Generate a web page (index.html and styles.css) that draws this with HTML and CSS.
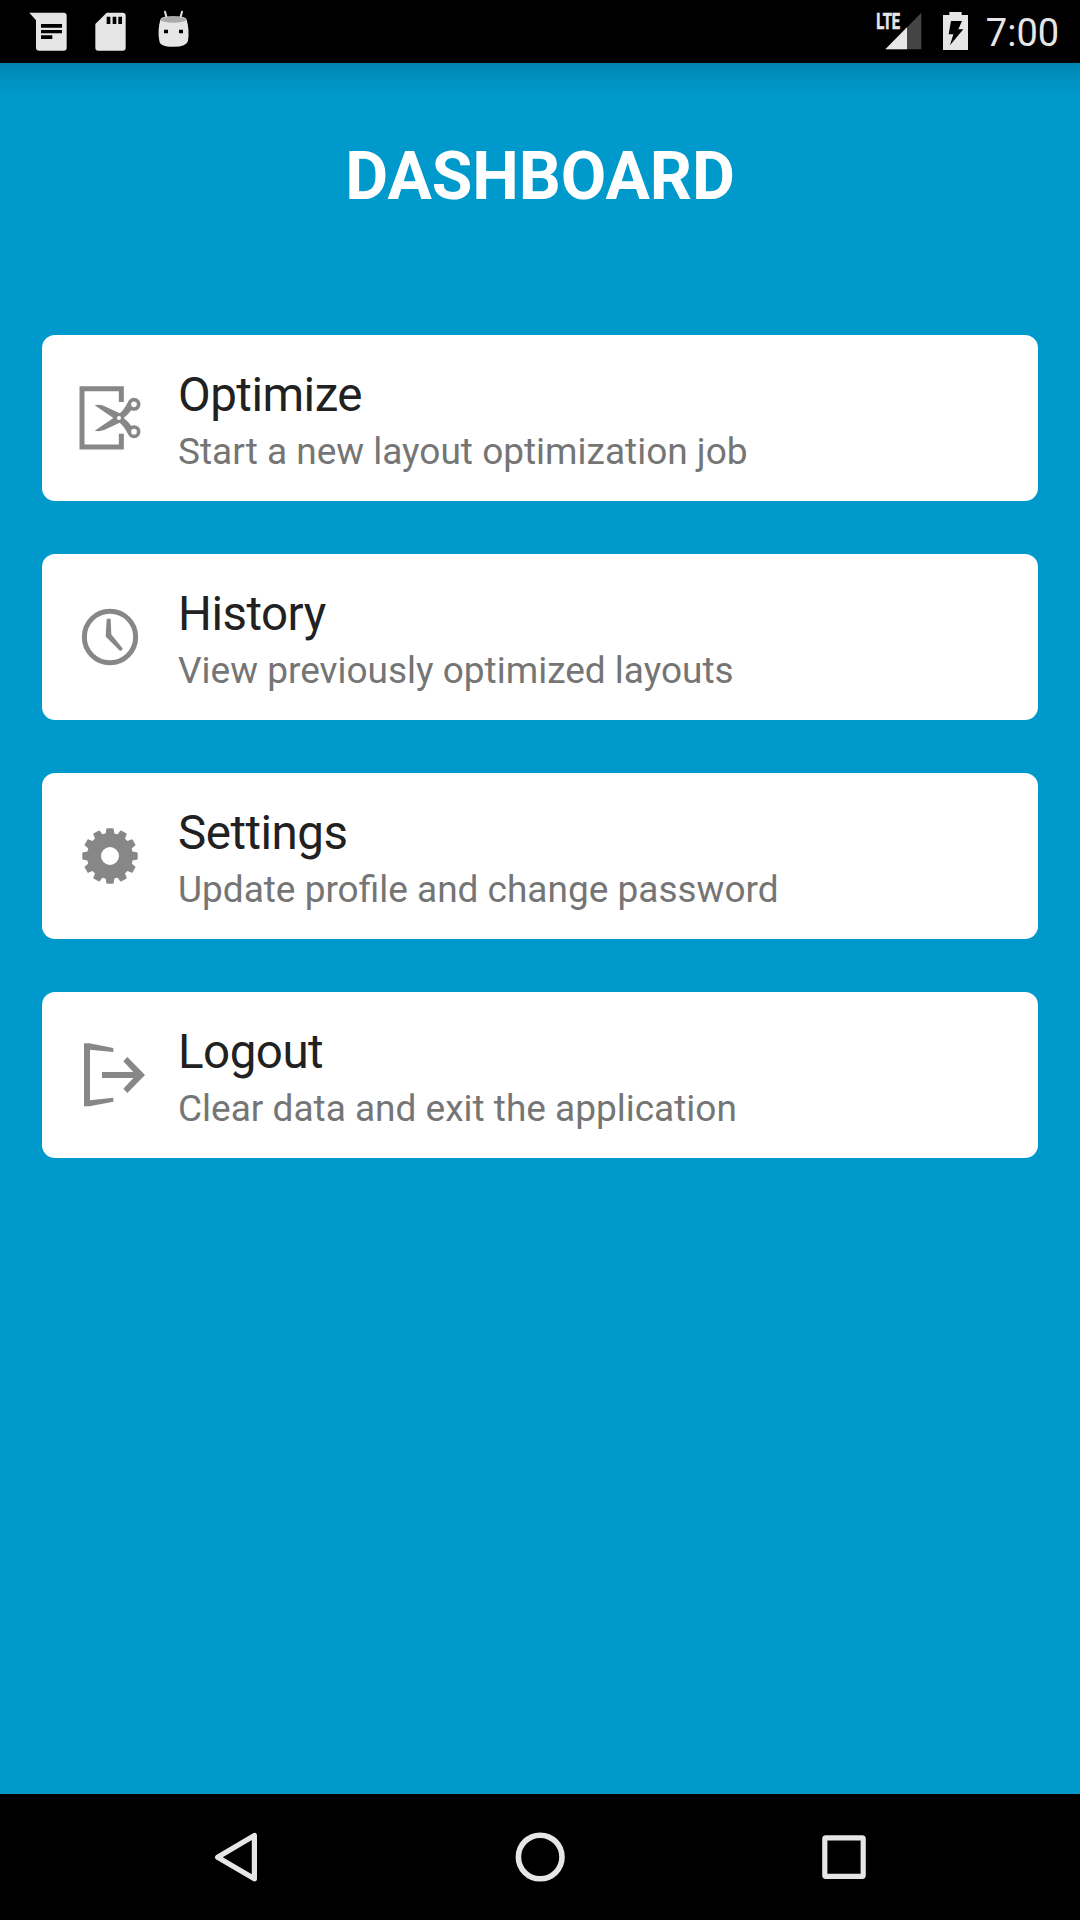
FILE: index.html
```html
<!DOCTYPE html>
<html lang="en">
<head>
<meta charset="utf-8">
<title>Dashboard</title>
<link rel="stylesheet" href="styles.css">
</head>
<body>
<div class="screen">
  <header class="status-bar">
    <svg class="status-left" viewBox="0 0 660 189" aria-hidden="true">
      <path fill="#e6e6e6" d="M88 38H191Q200 38 200 47V143Q200 152 191 152H118Q108 152 108 143V61Z"/>
      <path fill="#000" d="M123 72h63v11h-63zM123 90h63v10h-63zM123 106h34v11h-34z"/>
      <path fill="#e6e6e6" d="M320 38H368Q377 38 377 47V143Q377 152 368 152H295Q286 152 286 143V72Z"/>
      <path fill="#000" d="M320 50h11v22h-11zM338 50h11v22h-11zM355 50h11v22h-11z"/>
      <path fill="none" stroke="#e6e6e6" stroke-width="6" stroke-linecap="round" d="M495 35L500 54M546 35L541 54"/>
      <path fill="#e6e6e6" d="M481 59Q483 49 520 49T560 59Q569 91 564 122Q561 140 520 140T478 122Q472 91 481 59Z"/>
      <ellipse fill="#aaa" cx="520" cy="59" rx="38" ry="9"/>
      <path fill="#000" d="M492 89h12v11h-12zM537 89h12v11h-12z"/>
    </svg>
    <div class="status-right">
      <svg class="signal" viewBox="0 0 340 189" aria-hidden="true">
        <path fill="#444" d="M184 38V148H76Z"/>
        <path fill="#e6e6e6" d="M141 82V148H76Z"/>
        <text class="network" x="49" y="87" textLength="71" lengthAdjust="spacingAndGlyphs">LTE</text>
        <path fill="#e6e6e6" d="M249 45H268V36H305V45H324V150H249Z"/>
        <path fill="#000" d="M273 63H306L295 88H310L270 136L280 103H266Z"/>
      </svg>
      <span class="clock">7:00</span>
    </div>
  </header>

  <main class="content">
    <h1 class="heading">DASHBOARD</h1>
    <nav class="cards">
      <a class="card">
        <svg class="card-icon" viewBox="0 -6 300 300" aria-hidden="true">
          <path fill="none" stroke="#878787" stroke-width="15" d="M184 96V56H66V231H184V191"/>
          <path fill="#878787" d="M104 106Q118 102 134 109L179 130Q190 122 203 98L218 115Q205 134 191 144Q205 154 218 173L203 190Q190 166 179 158L134 179Q118 186 104 182L160 144Z"/>
          <g fill="#fff" stroke="#878787" stroke-width="11"><circle cx="222" cy="103" r="14"/><circle cx="222" cy="185" r="14"/></g>
          <circle fill="#fff" cx="177" cy="144" r="6"/>
        </svg>
        <span class="card-text"><span class="title">Optimize</span><span class="subtitle">Start a new layout optimization job</span></span>
      </a>
      <a class="card">
        <svg class="card-icon" viewBox="0 -9 300 300" aria-hidden="true">
          <circle cx="150" cy="141" r="77" fill="none" stroke="#878787" stroke-width="15"/>
          <path fill="#878787" stroke="#878787" stroke-width="4" stroke-linejoin="round" d="M142 88H150L152 134L186 176L181 181L139 139Z"/>
        </svg>
        <span class="card-text"><span class="title">History</span><span class="subtitle">View previously optimized layouts</span></span>
      </a>
      <a class="card">
        <svg class="card-icon" viewBox="0 -12 300 300" aria-hidden="true">
          <circle cx="150" cy="138" r="48" fill="none" stroke="#878787" stroke-width="42"/>
          <g fill="#878787">
            <g id="teeth"><path d="M136 78L139 58Q139 55 142 55H158Q161 55 161 58L164 78ZM136 198L139 218Q139 221 142 221H158Q161 221 161 218L164 198Z"/></g>
            <use href="#teeth" transform="rotate(30 150 138)"/>
            <use href="#teeth" transform="rotate(60 150 138)"/>
            <use href="#teeth" transform="rotate(90 150 138)"/>
            <use href="#teeth" transform="rotate(120 150 138)"/>
            <use href="#teeth" transform="rotate(150 150 138)"/>
          </g>
        </svg>
        <span class="card-text"><span class="title">Settings</span><span class="subtitle">Update profile and change password</span></span>
      </a>
      <a class="card">
        <svg class="card-icon" viewBox="0 0 300 300" aria-hidden="true">
          <path fill="#878787" d="M72 55H88L160 69V81L90 74V226L160 218V230L88 244H72Z"/>
          <path fill="#878787" d="M126 141H220L190 109L202 96L255 150L202 204L190 191L220 159H126Z"/>
        </svg>
        <span class="card-text"><span class="title">Logout</span><span class="subtitle">Clear data and exit the application</span></span>
      </a>
    </nav>
  </main>

  <footer class="nav-bar">
    <svg class="nav-icons" viewBox="0 0 1080 126" aria-hidden="true">
      <g fill="none" stroke="#e6e6e6" stroke-width="5.2" stroke-linejoin="round">
        <path d="M217.6 63.3L254.4 41.4V84.8Z"/>
        <circle cx="540.2" cy="63" r="21.8" stroke-width="5.6"/>
        <rect x="824.8" y="43.9" width="38.4" height="38.4" rx="1"/>
      </g>
    </svg>
  </footer>
</div>
</body>
</html>
```
FILE: styles.css
```css
* { box-sizing: border-box; }

body {
  margin: 0;
  font-family: Roboto, "Liberation Sans", sans-serif;
}

.screen {
  display: flex;
  flex-direction: column;
  width: 1080px;
  height: 1920px;
  background: #0099cc;
}

.status-bar {
  display: flex;
  justify-content: space-between;
  height: 63px;
  background: #000;
}

.status-left { width: 220px; height: 63px; }
.status-right { display: flex; width: 220px; }
.signal { flex: none; width: 113.33px; height: 63px; }

.network {
  fill: #e6e6e6;
  stroke: #e6e6e6;
  stroke-width: 2px;
  font-size: 65px;
  font-weight: 700;
}

.clock {
  padding-left: 12.5px;
  color: #e6e6e6;
  font-size: 38px;
  line-height: 67px;
  white-space: nowrap;
}

.content {
  flex: 1;
  padding: 74px 42px 0;
  background: linear-gradient(rgba(0, 0, 0, 0.13), rgba(0, 0, 0, 0.05) 16px, transparent 36px);
}

.heading {
  margin: 0;
  color: #fff;
  font-size: 66px;
  font-weight: 700;
  line-height: 80px;
  letter-spacing: -0.1px;
  text-align: center;
}

.cards {
  display: grid;
  gap: 53px;
  margin-top: 118px;
}

.card {
  display: flex;
  align-items: center;
  height: 166px;
  padding-left: 18px;
  border-radius: 13px;
  background: #fff;
}

.card-icon { width: 100px; height: 100px; }

.card-text {
  display: flex;
  flex-direction: column;
  padding: 5px 0 0 18px;
}

.title {
  color: #212121;
  font-size: 47.5px;
  line-height: 62px;
  letter-spacing: -0.5px;
}

.subtitle {
  margin-top: 1px;
  color: #757575;
  font-size: 37px;
  line-height: 50px;
}

.nav-bar { height: 126px; background: #000; }
.nav-icons { display: block; width: 1080px; height: 126px; }
```
